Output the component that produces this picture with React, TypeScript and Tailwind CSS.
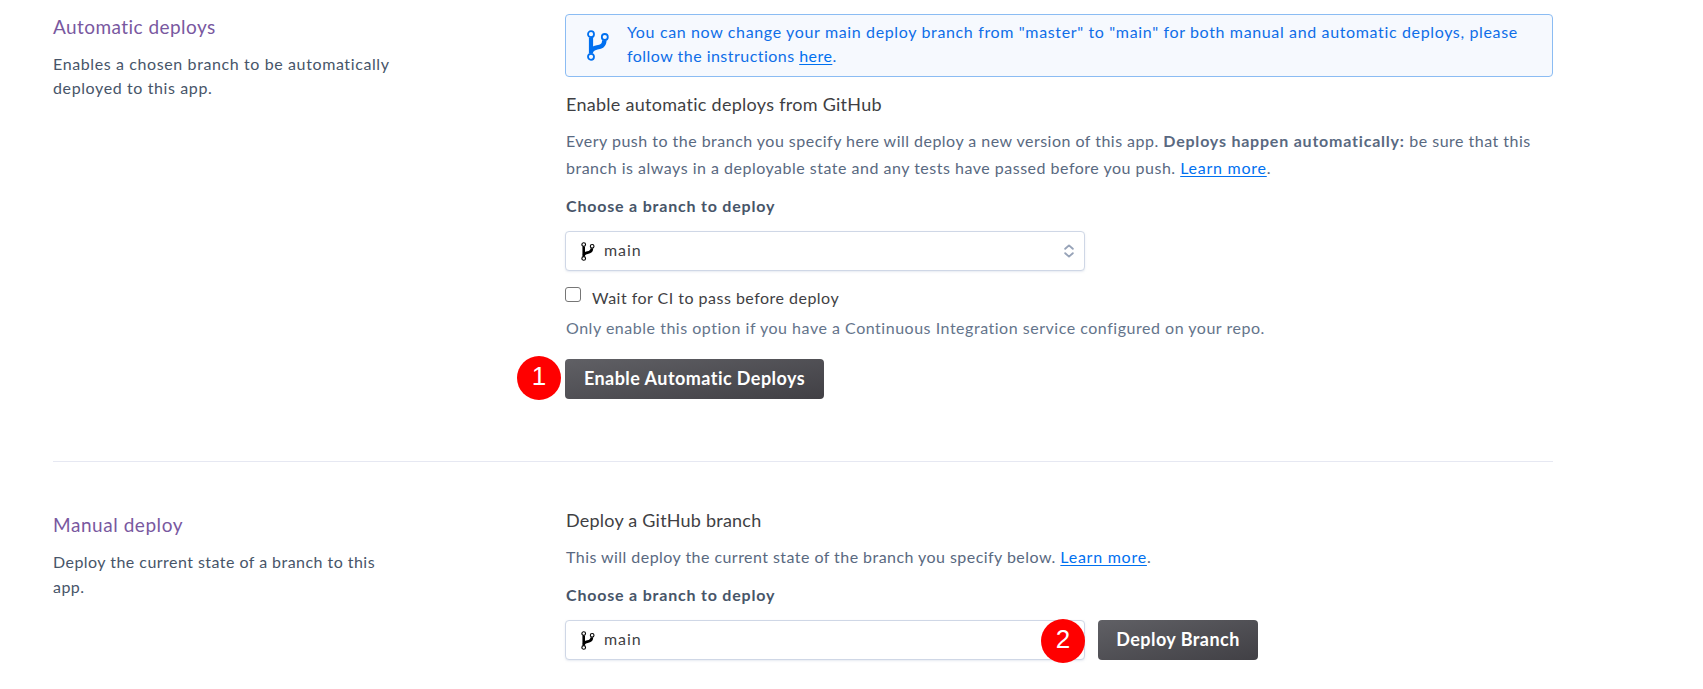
import React from "react";

function BranchIcon({ className }: { className: string }) {
  return (
    <svg viewBox="0 0 22 31" className={className} fill="none" stroke="currentColor">
      <path d="M4 7.6V23.4" strokeWidth="4.2" />
      <path d="M4.4 21.2C6 14.8 16.8 20.6 17.4 10.4" strokeWidth="4.4" />
      <circle cx="4" cy="4.2" r="3" strokeWidth="1.8" />
      <circle cx="17.8" cy="7" r="3" strokeWidth="1.8" />
      <circle cx="4" cy="26.8" r="3" strokeWidth="1.8" />
    </svg>
  );
}

function BranchSelect({ children }: { children?: React.ReactNode }) {
  return (
    <div className="relative flex h-10 w-[520px] items-center rounded-[4px] border border-[#cfd7e6] bg-white pl-[15px] pr-[10px] shadow-[0_1px_2px_rgba(207,215,230,0.5)]">
      <BranchIcon className="h-[19px] w-[14px] text-black" />
      <span className="ml-[9px] pb-[3px] text-[16px] leading-6 tracking-[0.9px] text-[#3f3f44]">main</span>
      <svg viewBox="0 0 10 14" className="ml-auto h-[14px] w-[10px]" fill="none" stroke="#97a3b8" strokeWidth="1.9" strokeLinecap="round" strokeLinejoin="round">
        <path d="M1.2 4.8L5 1.4L8.8 4.8M1.2 9.2L5 12.6L8.8 9.2" />
      </svg>
      {children}
    </div>
  );
}

function Badge({ n, className }: { n: number; className: string }) {
  return (
    <span className={`absolute flex h-11 w-11 items-center justify-center rounded-full bg-[#ff0000] pb-[5px] font-['Liberation_Sans',sans-serif] text-[26px] leading-none text-white ${className}`}>
      {n}
    </span>
  );
}

const link = "text-[#0070f0] underline underline-offset-2 decoration-1";
const button =
  "flex h-10 items-center justify-center rounded-[4px] bg-linear-to-br from-[#606065] to-[#414045] pb-[2px] text-[18px] font-bold tracking-[0.45px] text-white";

export default function App() {
  return (
    <main className="h-[689px] w-full overflow-hidden bg-white pl-[53px] pt-[14px] font-['Lato',sans-serif] text-[16px]">
      <section className="flex h-[448px] w-[1500px] border-b border-[#e6e8f2]">
        <div className="w-[512px]">
          <h2 className="text-[19px] leading-[26px] tracking-[0.44px] text-[#79589f]">Automatic deploys</h2>
          <p className="mt-3 leading-6 tracking-[0.61px] text-[#475569]">
            Enables a chosen branch to be automatically
            <br />
            deployed to this app.
          </p>
        </div>
        <div className="w-[988px]">
          <div className="flex h-[63px] rounded-[4px] border border-[#8bbcf3] bg-[#f6f9fe] pl-[21px]">
            <BranchIcon className="mt-[15px] h-[31px] w-[22px] text-[#0070f0]" />
            <p className="ml-[18px] mt-[5px] whitespace-nowrap leading-6 tracking-[0.47px] text-[#0f6ee8]">
              <span className="tracking-[0.64px]">
                You can now change your main deploy branch from "master" to "main" for both manual and automatic deploys, please
              </span>
              <br />
              follow the instructions <a className={link}>here</a>.
            </p>
          </div>
          <h3 className="mt-[13px] pl-px text-[18px] leading-7 tracking-[0.28px] text-[#3f3f44]">Enable automatic deploys from GitHub</h3>
          <p className="mt-[9px] whitespace-nowrap pl-px leading-[27px] tracking-[0.48px] text-[#596981]">
            Every push to the branch you specify here will deploy a new version of this app.{" "}
            <b className="tracking-[0.79px]">Deploys happen automatically:</b> be sure that this
            <br />
            <span className="tracking-[0.5px]">
              branch is always in a deployable state and any tests have passed before you push.{" "}
            </span>
            <a className={`${link} tracking-[0.75px]`}>Learn more</a>.
          </p>
          <p className="mb-[13px] mt-[13px] pl-px font-bold leading-6 tracking-[0.8px] text-[#475569]">Choose a branch to deploy</p>
          <BranchSelect />
          <label className="mt-4 flex h-[26px]">
            <span className="h-[15px] w-4 rounded-[3px] border border-[#767676] bg-white" />
            <span className="ml-[11px] leading-[21px] tracking-[0.48px] text-[#3f3f44]">Wait for CI to pass before deploy</span>
          </label>
          <p className="pl-px leading-[30px] tracking-[0.52px] text-[#64748b]">
            Only enable this option if you have a Continuous Integration service configured on your repo.
          </p>
          <div className="relative mt-4">
            <button className={`${button} w-[259px]`}>Enable Automatic Deploys</button>
            <Badge n={1} className="-left-12 -top-[3px]" />
          </div>
        </div>
      </section>
      <section className="flex pt-[44px]">
        <div className="w-[512px] pt-[6px]">
          <h2 className="text-[19px] leading-[26px] tracking-[0.55px] text-[#79589f]">Manual deploy</h2>
          <p className="mt-3 leading-[24.5px] tracking-[0.46px] text-[#475569]">
            Deploy the current state of a branch to this
            <br />
            app.
          </p>
        </div>
        <div className="w-[988px]">
          <h3 className="pl-px text-[18px] leading-7 tracking-[0.22px] text-[#3f3f44]">Deploy a GitHub branch</h3>
          <p className="mt-[9px] pl-px leading-[27px] tracking-[0.45px] text-[#596981]">
            This will deploy the current state of the branch you specify below.{" "}
            <a className={`${link} tracking-[0.75px]`}>Learn more</a>.
          </p>
          <p className="mb-[13px] mt-[13px] pl-px font-bold leading-6 tracking-[0.8px] text-[#475569]">Choose a branch to deploy</p>
          <div className="flex gap-[13px]">
            <BranchSelect>
              <Badge n={2} className="-right-px -top-[2px]" />
            </BranchSelect>
            <button className={`${button} w-40`}>Deploy Branch</button>
          </div>
        </div>
      </section>
    </main>
  );
}
